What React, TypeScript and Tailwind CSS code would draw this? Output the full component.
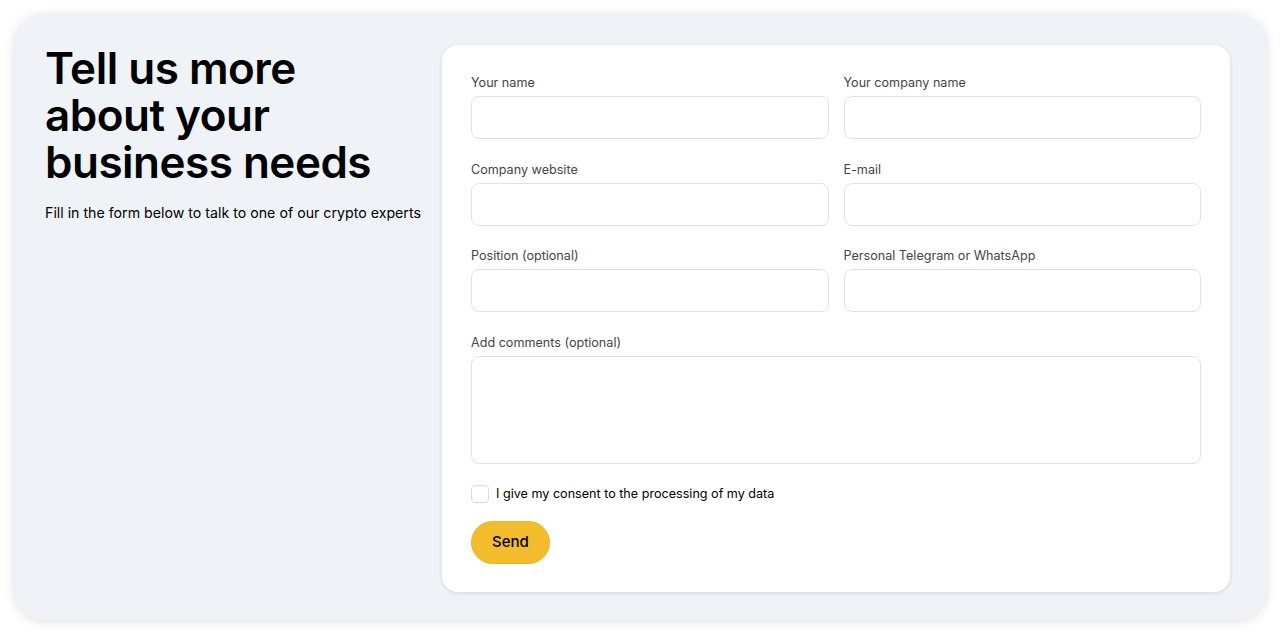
import { useState } from "react";

const fields = [
  { id: "name", label: "Your name" },
  { id: "company", label: "Your company name" },
  { id: "website", label: "Company website" },
  { id: "email", label: "E-mail" },
  { id: "position", label: "Position (optional)" },
  { id: "messenger", label: "Personal Telegram or WhatsApp" },
];

export default function App() {
  const [values, setValues] = useState<Record<string, string>>({});
  const [consent, setConsent] = useState(false);

  return (
    <div className="min-h-screen bg-white p-[15px] font-['Inter',sans-serif]">
      <div className="flex h-[605px] rounded-[30px] bg-[#eff3f7] pt-[30px] pr-[36px] pb-[28px] pl-[30px] shadow-[0_1px_12px_rgba(0,0,0,0.14)]">
        <div className="flex-1">
          <h1 className="text-[44px] font-semibold leading-[47px] tracking-[-0.5px] text-black">
            Tell us more
            <br />
            about your
            <br />
            business needs
          </h1>
          <p className="mt-[16px] text-[14.2px] leading-[22px] text-black">
            Fill in the form below to talk to one of our crypto experts
          </p>
        </div>

        <div className="w-[788px] rounded-[16px] bg-white px-[29px] pt-[28px] pb-[29px] shadow-[0_1px_4px_rgba(0,0,0,0.12)]">
          <div className="grid grid-cols-2 gap-x-[15px] gap-y-[20.5px]">
            {fields.map(f => (
              <div key={f.id}>
                <label htmlFor={f.id} className="block text-[12.6px] leading-[19px] text-[#454545]">{f.label}</label>
                <input
                  id={f.id}
                  type="text"
                  value={values[f.id] || ""}
                  onChange={e => setValues({ ...values, [f.id]: e.target.value })}
                  className="mt-[4px] block h-[43px] w-full rounded-[8px] border border-[#e2e2e2] bg-white px-3 text-sm outline-none"
                />
              </div>
            ))}
            <div className="col-span-2">
              <label htmlFor="comments" className="block text-[12.6px] leading-[19px] text-[#454545]">Add comments (optional)</label>
              <textarea
                id="comments"
                className="mt-[4px] block h-[108px] w-full resize-none rounded-[8px] border border-[#e2e2e2] bg-white px-3 py-2 text-sm outline-none"
              />
            </div>
          </div>

          <label className="mt-[21px] flex items-center gap-[7px] text-[12.6px] leading-[18px] text-black">
            <input
              type="checkbox"
              checked={consent}
              onChange={e => setConsent(e.target.checked)}
              className="h-[18px] w-[18px] appearance-none rounded-[4px] border border-[#dcdcdc] bg-white"
            />
            I give my consent to the processing of my data
          </label>

          <button className="mt-[18px] h-[43px] w-[79px] rounded-full border border-[#ebb51f] bg-[#f3bc2c] text-[15px] font-medium text-black">
            Send
          </button>
        </div>
      </div>
    </div>
  );
}
